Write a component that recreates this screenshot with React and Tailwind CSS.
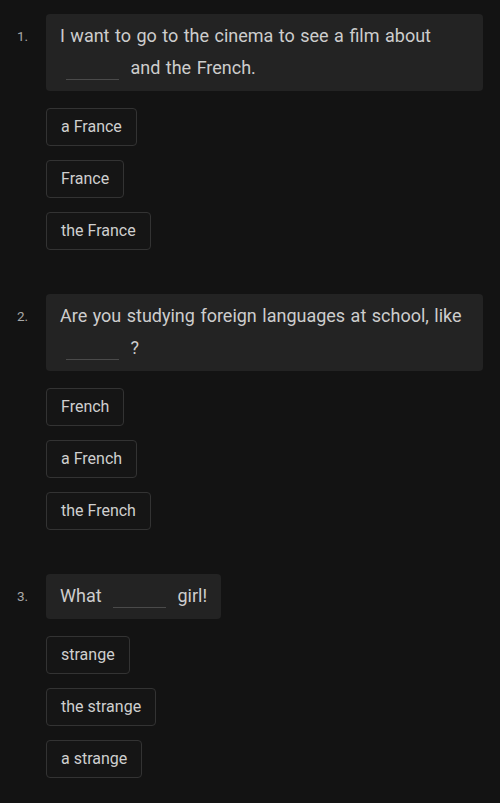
import React from 'react';

const questions = [
  {
    n: 1,
    before: 'I want to go to the cinema to see a film about',
    after: 'and the French.',
    options: ['a France', 'France', 'the France'],
  },
  {
    n: 2,
    before: 'Are you studying foreign languages at school, like',
    after: '?',
    options: ['French', 'a French', 'the French'],
  },
  {
    n: 3,
    before: 'What',
    after: 'girl!',
    options: ['strange', 'the strange', 'a strange'],
  },
];

function Blank() {
  return <span className="inline-block w-[53px] mx-[6px] border-b border-[#4a4a4a] translate-y-[6px]"></span>;
}

function Question({ q }) {
  return (
    <div className="flex">
      <div className="w-[46px] shrink-0 pl-[17px] pt-[12px] text-[13.5px] text-[#a8a8a8]">{q.n}.</div>
      <div className="flex flex-col min-w-0">
        <div className="w-fit max-w-[437px] bg-[#232323] rounded-[4px] pl-[14px] pr-[14px] pt-[6px] pb-[7px] text-[18px] leading-[32px] text-[#cdcdcd] [word-spacing:1px]">
          {q.before} <Blank /> {q.after}
        </div>
        <div className="flex flex-col items-start gap-[14px] mt-[17px]">
          {q.options.map((o) => (
            <div
              key={o}
              className="h-[38px] flex items-center px-[14px] border border-[#333333] rounded-[4px] bg-[#151515] text-[16px] text-[#cfcfcf]"
            >
              {o}
            </div>
          ))}
        </div>
      </div>
    </div>
  );
}

export default function App() {
  return (
    <div className="min-h-[803px] bg-[#131313] pt-[14px] flex flex-col gap-[44px] font-['Roboto',sans-serif]">
      {questions.map((q) => (
        <Question key={q.n} q={q} />
      ))}
    </div>
  );
}
